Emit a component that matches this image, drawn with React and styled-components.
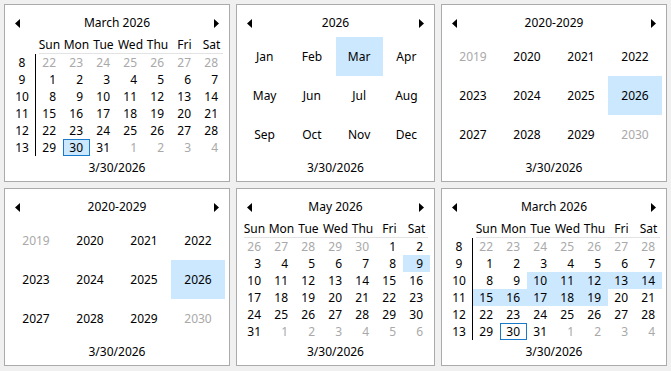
import React from 'react';
import styled, { createGlobalStyle } from 'styled-components';

const GlobalStyle = createGlobalStyle`
  html, body { margin: 0; padding: 0; background: #f0f0f0; }
  body {
    font-family: "Noto Sans", "Open Sans", sans-serif;
    font-size: 12px;
    color: #000;
  }
`;

const Page = styled.div`
  display: grid;
  grid-template-columns: 226px 199px 226px;
  grid-template-rows: 178px 178px;
  gap: 6px;
  padding: 4px;
`;

const Panel = styled.div`
  box-sizing: border-box;
  background: #fff;
  border: 1px solid #ababab;
  padding: 4px 4px 0;
  display: flex;
  flex-direction: column;
`;

const Header = styled.div`
  height: 28px;
  flex: none;
  display: flex;
  align-items: center;
  padding: 0 6px;
`;

const Title = styled.div`
  flex: 1;
  text-align: center;
  line-height: 16px;
`;

const ArrowSvg = styled.svg`
  display: block;
  flex: none;
  width: 5px;
  height: 9px;
  margin-top: 1px;
`;

const Arrow = ({ dir }) => (
  <ArrowSvg viewBox="0 0 5 9">
    <polygon points={dir === 'left' ? '5,0 0,4.5 5,9' : '0,0 5,4.5 0,9'} fill="#000" />
  </ArrowSvg>
);

const NamesRow = styled.div`
  display: flex;
  height: 17px;
  flex: none;
`;

const WeekSpacer = styled.div`
  width: 27px;
  flex: none;
`;

const Names = styled.div`
  position: relative;
  display: grid;
  grid-template-columns: repeat(7, 27px);
  &::after {
    content: '';
    position: absolute;
    left: 3px;
    right: 2px;
    bottom: 0;
    height: 1px;
    background: #e3e3e3;
  }
`;

const Name = styled.div`
  text-align: center;
  line-height: 16px;
`;

const Body = styled.div`
  display: flex;
  flex: none;
`;

const WeekCol = styled.div`
  width: 26px;
  border-right: 1px solid #000;
  display: grid;
  grid-auto-rows: 17px;
`;

const Week = styled.div`
  text-align: center;
  line-height: 17px;
`;

const Days = styled.div`
  display: grid;
  grid-template-columns: repeat(7, 27px);
  grid-auto-rows: 17px;
`;

const Day = styled.div`
  box-sizing: border-box;
  text-align: right;
  padding-right: 6px;
  line-height: 15px;
  color: ${(p) => (p.$muted ? '#a9a9a9' : '#000')};
  background: ${(p) => (p.$sel ? '#cce8ff' : 'transparent')};
  border: 1px solid ${(p) => (p.$today ? '#1979ca' : 'transparent')};
`;

const BigGrid = styled.div`
  display: grid;
  grid-template-columns: repeat(4, 1fr);
  grid-auto-rows: 39px;
  flex: none;
`;

const BigCell = styled.div`
  text-align: center;
  line-height: 39px;
  color: ${(p) => (p.$muted ? '#a9a9a9' : '#000')};
  background: ${(p) => (p.$sel ? '#cce8ff' : 'transparent')};
`;

const Footer = styled.div`
  margin-top: auto;
  margin-bottom: 3px;
  height: 20px;
  line-height: 20px;
  text-align: center;
  flex: none;
`;

const MONTHS = ['January', 'February', 'March', 'April', 'May', 'June', 'July', 'August', 'September', 'October', 'November', 'December'];
const SHORT = ['Jan', 'Feb', 'Mar', 'Apr', 'May', 'Jun', 'Jul', 'Aug', 'Sep', 'Oct', 'Nov', 'Dec'];
const DAYNAMES = ['Sun', 'Mon', 'Tue', 'Wed', 'Thu', 'Fri', 'Sat'];
const TODAY = '3/30/2026';

function monthDays(year, month) {
  const first = new Date(year, month, 1);
  const offset = first.getDay() === 0 ? 7 : first.getDay();
  return Array.from({ length: 42 }, (_, i) => {
    const d = new Date(year, month, 1 - offset + i);
    return { day: d.getDate(), month: d.getMonth(), year: d.getFullYear() };
  });
}

const MonthView = ({ year, month, startWeek, isSel, isToday }) => {
  const days = monthDays(year, month);
  const showWeeks = startWeek != null;
  return (
    <Panel>
      <Header>
        <Arrow dir="left" />
        <Title>{MONTHS[month]} {year}</Title>
        <Arrow dir="right" />
      </Header>
      <NamesRow>
        {showWeeks && <WeekSpacer />}
        <Names>
          {DAYNAMES.map((n) => (
            <Name key={n}>{n}</Name>
          ))}
        </Names>
      </NamesRow>
      <Body>
        {showWeeks && (
          <WeekCol>
            {Array.from({ length: 6 }, (_, i) => (
              <Week key={i}>{startWeek + i}</Week>
            ))}
          </WeekCol>
        )}
        <Days>
          {days.map((d, i) => (
            <Day
              key={i}
              $muted={d.month !== month}
              $sel={isSel(d)}
              $today={isToday(d)}
            >
              {d.day}
            </Day>
          ))}
        </Days>
      </Body>
      <Footer>{TODAY}</Footer>
    </Panel>
  );
};

const YearView = ({ year, selMonth }) => (
  <Panel>
    <Header>
      <Arrow dir="left" />
      <Title>{year}</Title>
      <Arrow dir="right" />
    </Header>
    <BigGrid>
      {SHORT.map((m, i) => (
        <BigCell key={m} $sel={i === selMonth}>
          {m}
        </BigCell>
      ))}
    </BigGrid>
    <Footer>{TODAY}</Footer>
  </Panel>
);

const DecadeView = ({ start, selYear }) => (
  <Panel>
    <Header>
      <Arrow dir="left" />
      <Title>
        {start}-{start + 9}
      </Title>
      <Arrow dir="right" />
    </Header>
    <BigGrid>
      {Array.from({ length: 12 }, (_, i) => {
        const y = start - 1 + i;
        return (
          <BigCell key={y} $muted={i === 0 || i === 11} $sel={y === selYear}>
            {y}
          </BigCell>
        );
      })}
    </BigGrid>
    <Footer>{TODAY}</Footer>
  </Panel>
);

const isMarch30 = (d) => d.year === 2026 && d.month === 2 && d.day === 30;

export default function App() {
  return (
    <>
      <GlobalStyle />
      <Page>
        <MonthView year={2026} month={2} startWeek={8} isSel={isMarch30} isToday={isMarch30} />
        <YearView year={2026} selMonth={2} />
        <DecadeView start={2020} selYear={2026} />
        <DecadeView start={2020} selYear={2026} />
        <MonthView
          year={2026}
          month={4}
          isSel={(d) => d.month === 4 && d.day === 9}
          isToday={isMarch30}
        />
        <MonthView
          year={2026}
          month={2}
          startWeek={8}
          isSel={(d) => d.month === 2 && d.day >= 10 && d.day <= 19}
          isToday={isMarch30}
        />
      </Page>
    </>
  );
}
